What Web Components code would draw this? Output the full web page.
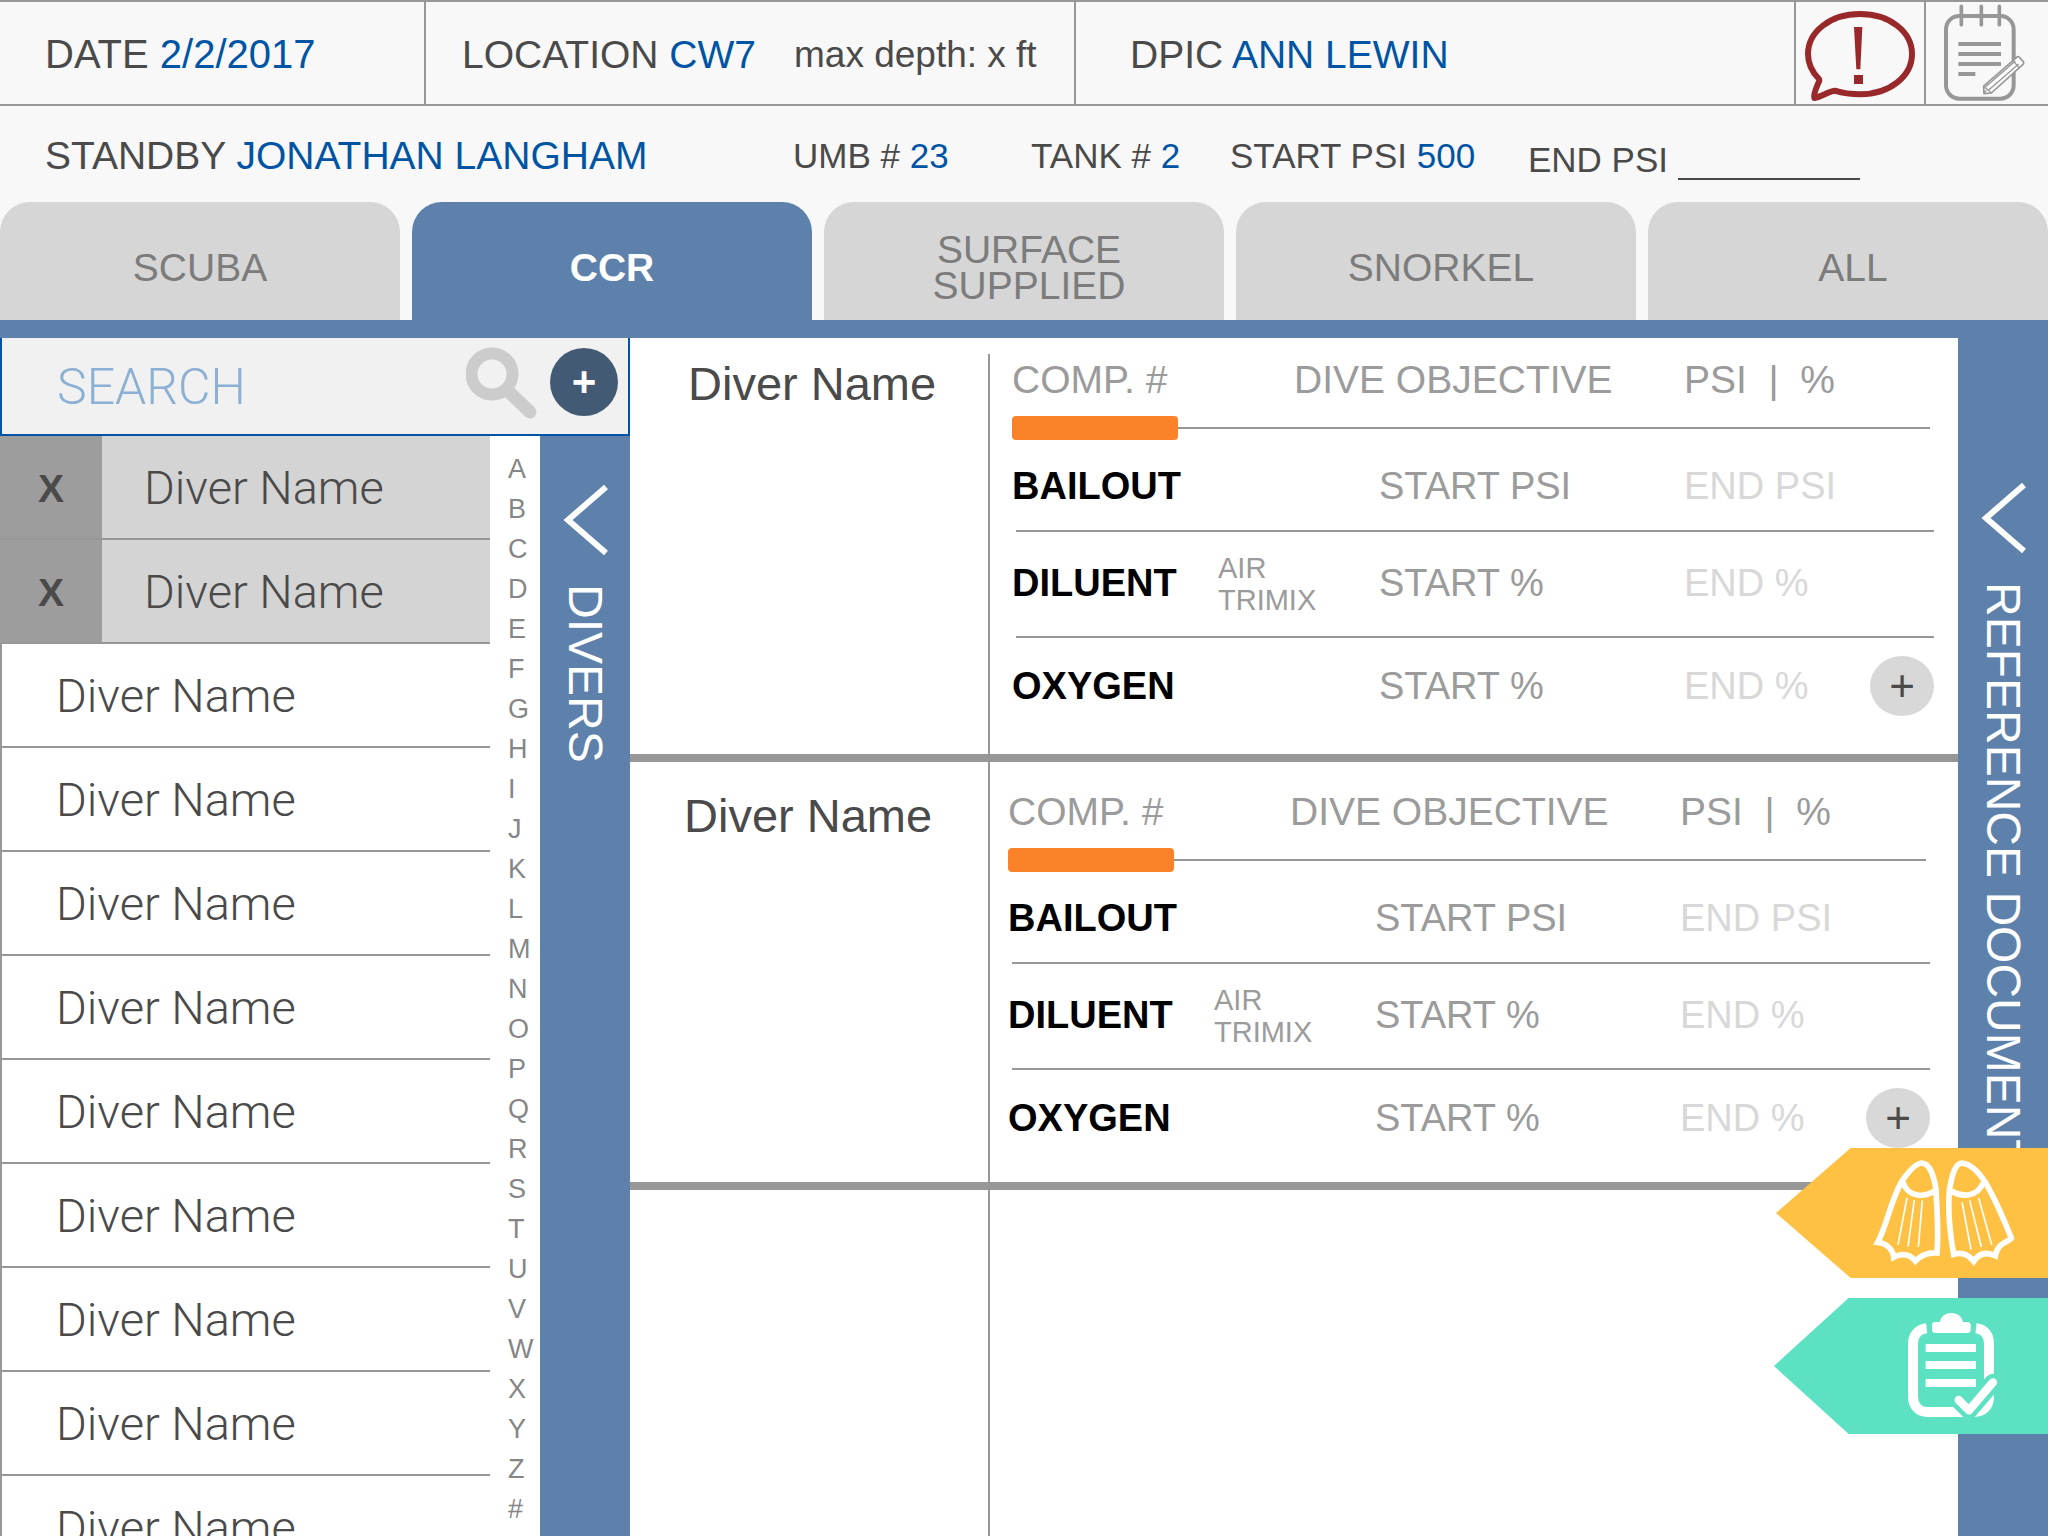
<!DOCTYPE html>
<html lang="en">
<head>
<meta charset="utf-8">
<title>Dive log</title>
<style>
html, body { height: 100%; margin: 0; }
body {
  --ink: #4a4a4a; --link: #0054a4; --rule: #979797; --mute: #9b9b9b; --faint: #d8d8d8;
  --steel: #5e81ac; --light: Roboto, "Liberation Sans", sans-serif;
  font-family: "Liberation Sans", Arial, sans-serif; color: var(--ink); background: #f8f8f8; overflow: hidden;
}
</style>
</head>
<body>
<dive-app></dive-app>
<script>
const define = (name, html, setup) => {
  const template = document.createElement('template');
  template.innerHTML = html;
  customElements.define(name, class extends HTMLElement {
    constructor() {
      super();
      this.attachShadow({ mode: 'open' }).append(template.content.cloneNode(true));
    }
    connectedCallback() { if (setup) setup(this, this.shadowRoot); }
  });
};

define('top-bar', `
<style>
:host { display: block; }
.row { display: grid; grid-template-columns: 426fr 650fr 720fr 130px 122px; height: 102px; border-top: 2px solid var(--rule); border-bottom: 2px solid var(--rule); font-size: 39px; white-space: nowrap; }
.cell { display: flex; align-items: center; padding-top: 3px; border-right: 2px solid var(--rule); }
.cell:nth-child(1) { padding-left: 45px; font-size: 40px; }
.cell:nth-child(2) { padding-left: 36px; gap: 38px; }
.cell:nth-child(3) { padding-left: 54px; }
b { font-weight: 400; color: var(--link); }
small { font-size: 37px; }
button { display: block; padding: 0; border: 0; background: none; }
button.alert { border-right: 2px solid var(--rule); }
svg { display: block; }
.standby { display: grid; grid-template-columns: 748fr 238fr 199fr 298fr 520fr; align-items: center; height: 92px; padding: 4px 0 0 45px; font-size: 35px; white-space: nowrap; }
.who { font-size: 39px; }
.field { display: flex; align-items: flex-end; gap: 10px; padding-top: 8px; }
input { width: 182px; height: 40px; padding: 0; border: 0; border-bottom: 2px solid var(--ink); background: none; font: inherit; color: var(--link); box-sizing: border-box; }
</style>
<div class="row">
  <div class="cell"><span>DATE <b>2/2/2017</b></span></div>
  <div class="cell"><span>LOCATION <b>CW7</b></span><small>max depth: x ft</small></div>
  <div class="cell"><span>DPIC <b>ANN LEWIN</b></span></div>
  <button class="alert" aria-label="Alerts"><svg width="128" height="102" viewBox="48 6 384 306">
    <path d="M117 237C97 217 84 190 84 162C84 96 150 42 240 42S396 96 396 162S330 283 240 283C212 283 187 279 164 272C143 275 126 290 103 294C99 281 113 255 118 242Z" fill="none" stroke="#982829" stroke-width="18" stroke-linejoin="round"/>
    <path d="M222 81h25l-6 127h-12zM222 225h27v27h-27z" fill="#982829"/></svg></button>
  <button aria-label="Notes"><svg width="122" height="102" viewBox="438 6 366 306" fill="none" stroke="#979797">
    <rect x="498" y="48" width="203" height="248" rx="40" stroke-width="12"/>
    <path d="M544 19v55M604 19v55M658 19v55" stroke-width="11" stroke-linecap="round"/>
    <path d="M535 132h128M535 162h128M535 192h128M535 222h51" stroke-width="12"/>
    <path d="M612 281L611 258L710 172Q714 168 719 173L729 184Q733 189 729 193L634 279Z" fill="#fff" stroke-width="5"/>
    <path d="M611 259L634 279M617 260L706 183M626 270L716 192M699 182L717 203M612 279L619 271" stroke-width="4"/></svg></button>
</div>
<div class="standby">
  <span class="who">STANDBY <b>JONATHAN LANGHAM</b></span>
  <span>UMB # <b>23</b></span><span>TANK # <b>2</b></span><span>START PSI <b>500</b></span>
  <div class="field"><label for="end">END PSI</label><input id="end" type="text"></div>
</div>`);

define('dive-tab', `
<style>
:host { display: block; }
button { display: block; width: 100%; height: 118px; padding: 14px 56px 0 var(--start, 56px); border: 0; border-radius: 30px 30px 0 0; background: #d6d6d6; color: #7c7c7c; font: 400 39px/36px "Liberation Sans", Arial, sans-serif; }
:host([active]) button { background: var(--steel); color: #fff; font-weight: 700; }
</style>
<button role="tab"><slot></slot></button>`);

define('side-bar', `
<style>
:host { display: block; width: 90px; background: var(--steel); flex: none; }
button { display: flex; flex-direction: column; align-items: center; gap: 28px; width: 100%; height: 100%; padding: var(--top, 48px) 0 0; border: 0; background: none; color: #fff; font: 400 48px/56px "Liberation Sans", Arial, sans-serif; }
svg { display: block; flex: none; }
span { writing-mode: vertical-rl; white-space: nowrap; }
</style>
<button><svg width="46" height="72" viewBox="0 0 46 72"><path d="M44 3L6 36L44 69" fill="none" stroke="#fff" stroke-width="6"/></svg><span><slot></slot></span></button>`);

define('search-box', `
<style>
:host { display: flex; align-items: flex-start; box-sizing: border-box; height: 98px; padding: 0 10px 0 55px; border: 2px solid var(--link); border-top: 0; background: #f1f1f1; }
input { flex: 1; min-width: 0; height: 96px; padding: 2px 0 0; box-sizing: border-box; border: 0; background: none; color: var(--link); font: 300 50px/94px var(--light); outline: none; }
input::placeholder { color: #8bb0d4; opacity: 1; }
svg { display: block; margin: 9px 12px 0 0; }
button { width: 68px; height: 68px; margin-top: 10px; padding: 0; border: 0; border-radius: 50%; background: #435a74; color: #fff; font: 700 42px/64px "Liberation Sans", Arial, sans-serif; }
</style>
<input type="text" placeholder="SEARCH" aria-label="Search">
<svg width="72" height="72" viewBox="0 0 72 72" fill="none" stroke="#ccc" stroke-width="12"><circle cx="26" cy="27" r="20.5"/><path d="M41 43L64 65" stroke-linecap="round" stroke-width="13"/></svg>
<button aria-label="Add diver">+</button>`);

define('diver-row', `
<style>
:host { display: flex; align-items: center; box-sizing: border-box; height: 104px; flex: none; border-bottom: 2px solid var(--rule); border-left: 2px solid var(--rule); background: #fff; font: 300 47px/56px var(--light); }
span { padding: 2px 0 0 54px; }
button { display: none; width: 102px; height: 100%; padding: 4px 0 0; border: 0; background: #9d9d9d; color: var(--ink); font: 700 39px/56px "Liberation Sans", Arial, sans-serif; }
:host([picked]) { border-left: 0; background: #d4d4d4; }
:host([picked]) button { display: block; }
:host([picked]) span { padding-left: 42px; }
</style>
<button aria-label="Remove diver">X</button><span><slot></slot></span>`);

define('letter-index', `
<style>
:host { display: flex; flex-direction: column; width: 50px; padding-top: 13px; box-sizing: border-box; background: #fff; flex: none; }
a { flex: none; height: 40px; padding-left: 18px; font-size: 27px; line-height: 40px; color: #868686; text-decoration: none; }
</style>`, (host, root) => {
  for (const c of 'ABCDEFGHIJKLMNOPQRSTUVWXYZ#') {
    const a = document.createElement('a');
    a.href = '#' + c; a.textContent = c;
    root.append(a);
  }
});

define('dive-card', `
<style>
:host { --inset: 4px; display: grid; grid-template-columns: 358px 1fr; box-sizing: border-box; height: 428px; flex: none; border-bottom: 8px solid var(--rule); }
:host([lead]) { --inset: 0px; height: 424px; }
h2 { margin: 0; padding: 28px 0 0 calc(58px - var(--inset)); font-size: 47px; font-weight: 400; line-height: 52px; }
.detail { border-left: 2px solid var(--rule); padding: 8px calc(24px + var(--inset)) 0 calc(22px - var(--inset)); font-size: 38px; line-height: 40px; color: var(--mute); white-space: nowrap; }
:host([lead]) h2 { padding-top: 20px; }
:host([lead]) .detail { margin-top: 16px; padding-top: 0; }
:host([lead]) .head { padding-top: 6px; }
.head { display: grid; grid-template-columns: 282fr 390fr 250fr; padding: 22px 0 16px; font-size: 39px; white-space: pre; }
.mark { display: flex; align-items: center; padding-right: 4px; }
.mark i { width: 166px; height: 24px; border-radius: 4px; background: #fb8229; }
.mark hr { flex: 1; }
hr { height: 2px; margin: 0 0 0 4px; border: 0; background: var(--rule); }
.mark hr { margin: 0; }
.gas { display: grid; grid-template-columns: 206fr 161fr 305fr 186fr 64px; align-items: center; }
.bail { padding: 26px 0 24px; }
.dil { padding: 18px 0 20px; }
.oxy { padding-top: 18px; }
strong { color: #000; }
.mix { padding-top: 2px; font-size: 29px; line-height: 32px; }
input { width: 100%; height: 40px; min-width: 0; padding: 0; border: 0; background: none; font: inherit; color: var(--ink); outline: none; }
input::placeholder { color: var(--mute); opacity: 1; }
input.end::placeholder { color: var(--faint); }
button { width: 64px; height: 60px; padding: 0; border: 0; border-radius: 50%; background: var(--faint); color: var(--ink); font: 400 44px/56px "Liberation Sans", Arial, sans-serif; }
</style>
<h2><slot></slot></h2>
<div class="detail">
  <div class="head"><span>COMP. #</span><span>DIVE OBJECTIVE</span><span>PSI &nbsp;| &nbsp;%</span></div>
  <div class="mark"><i></i><hr></div>
  <div class="gas bail"><strong>BAILOUT</strong><span></span><input placeholder="START PSI" aria-label="Bailout start PSI"><input class="end" placeholder="END PSI" aria-label="Bailout end PSI"></div>
  <hr>
  <div class="gas dil"><strong>DILUENT</strong><span class="mix">AIR<br>TRIMIX</span><input placeholder="START %" aria-label="Diluent start percent"><input class="end" placeholder="END %" aria-label="Diluent end percent"></div>
  <hr>
  <div class="gas oxy"><strong>OXYGEN</strong><span></span><input placeholder="START %" aria-label="Oxygen start percent"><input class="end" placeholder="END %" aria-label="Oxygen end percent"><button aria-label="Add gas">+</button></div>
</div>`);

define('quick-flags', `
<style>
:host { position: absolute; right: 0; bottom: 102px; display: flex; flex-direction: column; align-items: flex-end; gap: 20px; }
button { display: block; padding: 0; border: 0; background: none; }
svg { display: block; }
</style>
<button aria-label="Gear"><svg width="272" height="130" viewBox="108 204 816 390" fill="none" stroke="#fff">
  <path d="M108 399L332 204H924V594H332Z" fill="#ffc144" stroke="none"/>
  <path d="M413 487C440 440 452 360 486 303C505 276 528 250 545 249C570 250 580 285 588 325C590 390 597 450 591 519C565 517 545 524 526 543C510 524 488 518 461 532C459 508 440 490 413 487Z" stroke-width="17"/>
  <path d="M489 306C505 356 556 352 586 331" stroke-width="17"/>
  <path d="M501 354L474 494M523 360L504 500M547 361L535 501" stroke-width="5"/>
  <path d="M641 523C630 460 622 390 629 325C636 285 645 250 666 249C690 252 715 275 734 304C765 355 790 415 814 474C812 484 772 486 766 527C742 516 718 518 701 544C684 522 662 516 641 523Z" stroke-width="17"/>
  <path d="M634 333C665 352 712 352 729 309" stroke-width="17"/>
  <path d="M666 366L693 509M689 361L724 501M716 354L755 494" stroke-width="5"/></svg></button>
<button aria-label="Checklist"><svg width="274" height="136" viewBox="102 654 822 408" fill="none" stroke="#fff">
  <path d="M102 858L326 654H924V1062H326Z" fill="#5ce1c3" stroke="none"/>
  <path d="M560 745C535 748 519 765 519 790V950C519 978 537 996 562 996H702C730 996 747 978 747 950V790C747 765 733 748 708 745" stroke-width="30"/>
  <path d="M576 735Q576 726 586 726H600C602 710 615 699 634 699S666 710 669 726H682Q692 726 692 735V750Q692 759 682 759H586Q576 759 576 750Z" fill="#fff" stroke="none"/>
  <path d="M557 804H708M557 855H708M557 909H708" stroke-width="24"/>
  <path d="M656 960L687 991L759 907" stroke="#5ce1c3" stroke-width="52" stroke-linecap="round" stroke-linejoin="round"/>
  <path d="M656 960L687 991L759 907" stroke-width="25" stroke-linecap="round" stroke-linejoin="round"/></svg></button>`);

define('dive-app', `
<style>
:host { position: relative; display: flex; flex-direction: column; height: 100vh; min-height: 1200px; overflow: hidden; }
nav { display: grid; grid-template-columns: repeat(5, 1fr); gap: 12px; flex: none; border-bottom: 18px solid var(--steel); }
dive-tab:nth-child(n+3) { --start: 66px; }
.body { flex: 1; min-height: 0; display: flex; background: #fff; }
aside { width: 630px; flex: none; display: flex; flex-direction: column; }
.lists { flex: 1; min-height: 0; display: flex; overflow: hidden; }
.rows { flex: 1; display: flex; flex-direction: column; overflow: hidden; }
main { flex: 1; min-width: 0; display: flex; flex-direction: column; }
.blank { flex: 1; margin-left: 358px; border-left: 2px solid var(--rule); }
.docs { --top: 144px; }
</style>
<top-bar></top-bar>
<nav role="tablist"><dive-tab>SCUBA</dive-tab><dive-tab active>CCR</dive-tab><dive-tab>SURFACE SUPPLIED</dive-tab><dive-tab>SNORKEL</dive-tab><dive-tab>ALL</dive-tab></nav>
<div class="body">
  <aside>
    <search-box></search-box>
    <div class="lists">
      <div class="rows">
        <diver-row picked>Diver Name</diver-row><diver-row picked>Diver Name</diver-row>
        <diver-row>Diver Name</diver-row><diver-row>Diver Name</diver-row><diver-row>Diver Name</diver-row>
        <diver-row>Diver Name</diver-row><diver-row>Diver Name</diver-row><diver-row>Diver Name</diver-row>
        <diver-row>Diver Name</diver-row><diver-row>Diver Name</diver-row><diver-row>Diver Name</diver-row>
      </div>
      <letter-index></letter-index>
      <side-bar>DIVERS</side-bar>
    </div>
  </aside>
  <main>
    <dive-card lead>Diver Name</dive-card>
    <dive-card>Diver Name</dive-card>
    <div class="blank"></div>
  </main>
  <side-bar class="docs">REFERENCE DOCUMENTS</side-bar>
</div>
<quick-flags></quick-flags>`);
</script>
</body>
</html>
